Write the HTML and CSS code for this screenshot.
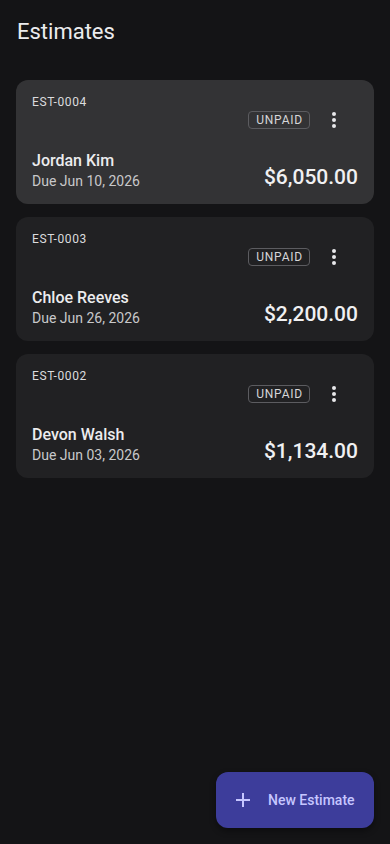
FILE: index.html
```html
<!DOCTYPE html>
<html lang="en">

<head>
    <meta charset="UTF-8">
    <meta name="viewport" content="width=device-width, initial-scale=1.0">
    <title>Estimates</title>
    <link rel="stylesheet" href="styles.css">
</head>

<body>
    <div class="app">
        <h1 class="page-title">Estimates</h1>

        <div class="list">
            <div class="card active">
                <div class="card-top">
                    <span class="est-id">EST-0004</span>
                    <div class="card-actions">
                        <span class="chip">UNPAID</span>
                        <svg class="more" viewBox="0 0 24 24" width="24" height="24"><circle cx="12" cy="6" r="2"/><circle cx="12" cy="12" r="2"/><circle cx="12" cy="18" r="2"/></svg>
                    </div>
                </div>
                <div class="card-bottom">
                    <div class="client">
                        <div class="name">Jordan Kim</div>
                        <div class="due">Due Jun 10, 2026</div>
                    </div>
                    <div class="amount">$6,050.00</div>
                </div>
            </div>

            <div class="card">
                <div class="card-top">
                    <span class="est-id">EST-0003</span>
                    <div class="card-actions">
                        <span class="chip">UNPAID</span>
                        <svg class="more" viewBox="0 0 24 24" width="24" height="24"><circle cx="12" cy="6" r="2"/><circle cx="12" cy="12" r="2"/><circle cx="12" cy="18" r="2"/></svg>
                    </div>
                </div>
                <div class="card-bottom">
                    <div class="client">
                        <div class="name">Chloe Reeves</div>
                        <div class="due">Due Jun 26, 2026</div>
                    </div>
                    <div class="amount">$2,200.00</div>
                </div>
            </div>

            <div class="card">
                <div class="card-top">
                    <span class="est-id">EST-0002</span>
                    <div class="card-actions">
                        <span class="chip">UNPAID</span>
                        <svg class="more" viewBox="0 0 24 24" width="24" height="24"><circle cx="12" cy="6" r="2"/><circle cx="12" cy="12" r="2"/><circle cx="12" cy="18" r="2"/></svg>
                    </div>
                </div>
                <div class="card-bottom">
                    <div class="client">
                        <div class="name">Devon Walsh</div>
                        <div class="due">Due Jun 03, 2026</div>
                    </div>
                    <div class="amount">$1,134.00</div>
                </div>
            </div>
        </div>

        <button class="fab">
            <svg viewBox="0 0 24 24" width="24" height="24"><path d="M12 5v14M5 12h14" stroke="currentColor" stroke-width="2" fill="none"/></svg>
            <span>New Estimate</span>
        </button>
    </div>
</body>

</html>
```

FILE: styles.css
```css
body {
    margin: 0;
    background-color: #141416;
    font-family: Roboto, 'Noto Sans', sans-serif;
    color: #e6e6e8;
}

.app {
    height: 844px;
    padding: 0 16px;
    box-sizing: border-box;
    display: flex;
    flex-direction: column;
}

.page-title {
    margin: 0;
    padding: 18px 1px 0;
    font-size: 22px;
    line-height: 28px;
    font-weight: 400;
    color: #ececee;
}

.list {
    margin-top: 34px;
    display: flex;
    flex-direction: column;
    gap: 13px;
}

.card {
    background-color: #212123;
    border-radius: 12px;
    padding: 14px 16px 13px 16px;
    height: 124px;
    box-sizing: border-box;
}

.card.active {
    background-color: #333335;
}

.card-top {
    display: flex;
    justify-content: space-between;
    align-items: flex-start;
}

.est-id {
    font-size: 12px;
    line-height: 16px;
    letter-spacing: 0.6px;
    color: #dcdcde;
}

.card-actions {
    display: flex;
    align-items: center;
    gap: 12px;
    margin-top: 14px;
    margin-right: 12px;
}

.chip {
    border: 1px solid #5c5c60;
    border-radius: 4px;
    font-size: 12px;
    line-height: 16px;
    letter-spacing: 0.8px;
    padding: 0 6px 0 7px;
    color: #d6d6d8;
}

.more {
    fill: #e8e8ea;
}

.card-bottom {
    display: flex;
    justify-content: space-between;
    align-items: flex-end;
    margin-top: 19px;
}

.name {
    font-size: 16px;
    line-height: 20px;
    font-weight: 500;
    color: #ececee;
}

.due {
    font-size: 14px;
    line-height: 20px;
    color: #c8c8ca;
}

.amount {
    font-size: 21px;
    line-height: 28px;
    font-weight: 500;
    color: #f0f0f2;
}

.fab {
    margin-top: auto;
    margin-bottom: 16px;
    align-self: flex-end;
    width: 158px;
    height: 56px;
    border: none;
    border-radius: 12px;
    background-color: #3d3d9b;
    color: #c6c6ff;
    display: flex;
    align-items: center;
    gap: 13px;
    padding: 0 0 0 15px;
    font-family: Roboto, 'Noto Sans', sans-serif;
    font-size: 14px;
    font-weight: 500;
    white-space: nowrap;
    box-shadow: 0 3px 6px rgba(0, 0, 0, 0.4);
    cursor: pointer;
}

.fab svg {
    flex-shrink: 0;
}
```
